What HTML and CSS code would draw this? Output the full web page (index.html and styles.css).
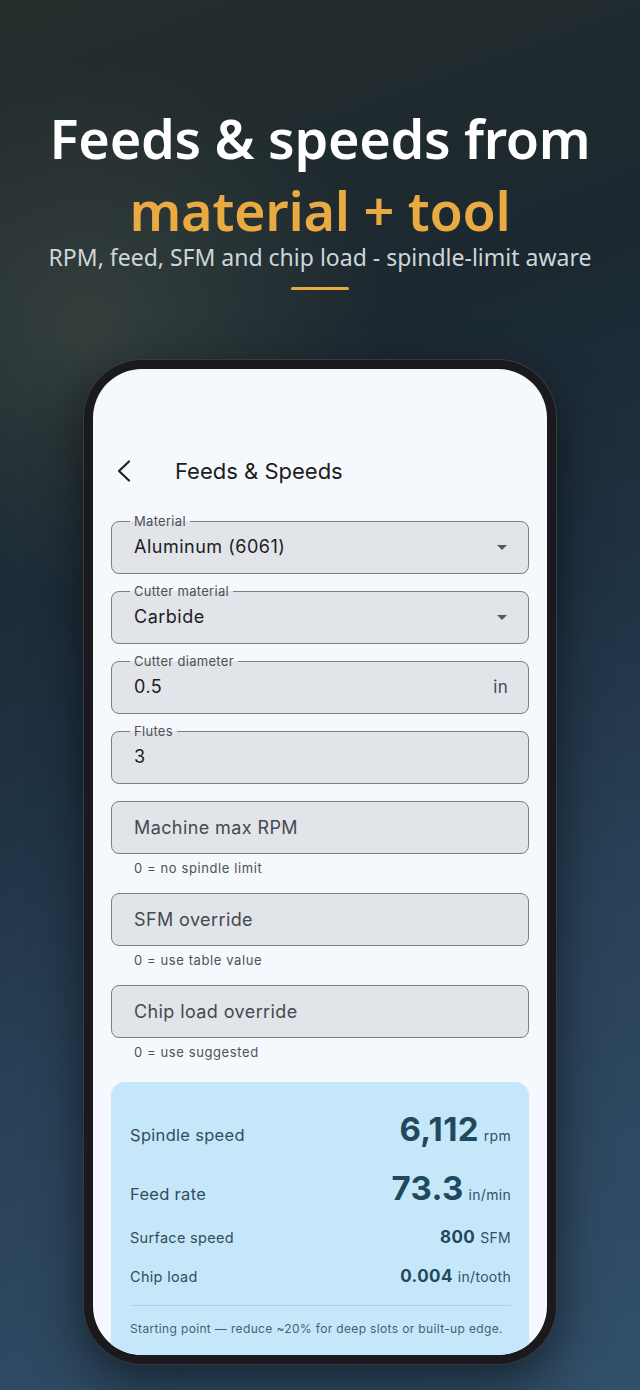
FILE: index.html
```html
<!DOCTYPE html>
<html lang="en">
<head>
  <meta charset="UTF-8" />
  <meta name="viewport" content="width=device-width, initial-scale=1.0"/>
  <title>Feeds &amp; Speeds</title>
  <link rel="stylesheet" href="styles.css">
</head>
<body>
  <div class="hero">
    <h1>Feeds &amp; speeds from<br><span class="accent">material + tool</span></h1>
    <p class="tagline">RPM, feed, SFM and chip load - spindle-limit aware</p>
    <div class="rule"></div>
  </div>

  <div class="phone">
    <div class="screen">
      <div class="appbar">
        <svg class="back" width="24" height="24" viewBox="0 0 24 24">
          <path d="M16 2.5 L6 12 L16 21.5" fill="none" stroke="#1f1f22" stroke-width="2.2" stroke-linecap="round" stroke-linejoin="round"/>
        </svg>
        <span class="title">Feeds &amp; Speeds</span>
      </div>

      <div class="form">
        <fieldset class="field">
          <legend>Material</legend>
          <span class="value">Aluminum (6061)</span>
          <span class="caret"></span>
        </fieldset>
        <fieldset class="field">
          <legend>Cutter material</legend>
          <span class="value">Carbide</span>
          <span class="caret"></span>
        </fieldset>
        <fieldset class="field">
          <legend>Cutter diameter</legend>
          <span class="value">0.5</span>
          <span class="suffix">in</span>
        </fieldset>
        <fieldset class="field">
          <legend>Flutes</legend>
          <span class="value">3</span>
        </fieldset>

        <div class="field empty"><span class="placeholder">Machine max RPM</span></div>
        <p class="helper">0 = no spindle limit</p>
        <div class="field empty"><span class="placeholder">SFM override</span></div>
        <p class="helper">0 = use table value</p>
        <div class="field empty"><span class="placeholder">Chip load override</span></div>
        <p class="helper">0 = use suggested</p>
      </div>

      <div class="results">
        <div class="row big">
          <span class="label">Spindle speed</span>
          <span class="num">6,112<small>rpm</small></span>
        </div>
        <div class="row big">
          <span class="label">Feed rate</span>
          <span class="num">73.3<small>in/min</small></span>
        </div>
        <div class="row">
          <span class="label">Surface speed</span>
          <span class="num">800<small>SFM</small></span>
        </div>
        <div class="row">
          <span class="label">Chip load</span>
          <span class="num">0.004<small>in/tooth</small></span>
        </div>
        <p class="note">Starting point — reduce ~20% for deep slots or built-up edge.</p>
      </div>
    </div>
  </div>
</body>
</html>
```

FILE: styles.css
```css
html, body {
  margin: 0;
  padding: 0;
}

body {
  width: 640px;
  height: 1390px;
  overflow: hidden;
  font-family: 'Noto Sans', sans-serif;
  background:
    radial-gradient(ellipse 420px 380px at 90px 330px, rgba(70, 80, 72, 0.55), rgba(70, 80, 72, 0) 70%),
    linear-gradient(160deg, #262e2d 0%, #1b2830 28%, #1f3142 48%, #2a4259 70%, #32506a 100%);
}

.hero {
  text-align: center;
  padding-top: 102px;
}

h1 {
  margin: 0;
  color: #fff;
  font-size: 54px;
  font-weight: 600;
  line-height: 72px;
  letter-spacing: -0.3px;
}

.accent {
  color: #e8aa41;
}

.tagline {
  margin: 0;
  color: #cfd6da;
  font-size: 23px;
  line-height: 22px;
}

.rule {
  width: 58px;
  height: 3px;
  margin: 19px auto 0;
  background: #e8aa41;
  border-radius: 2px;
}

.phone {
  width: 454px;
  height: 986px;
  margin: 70px auto 0;
  padding: 9px;
  background: #1a191e;
  border-radius: 58px;
  box-shadow: 0 0 0 1px #3a3a40, 0 18px 50px rgba(0, 0, 0, 0.55);
}

.screen {
  height: 100%;
  background: #f5f8fc;
  border-radius: 49px;
  overflow: hidden;
  font-family: 'Inter', 'Roboto', sans-serif;
  padding: 0 18px;
  box-sizing: border-box;
}

.appbar {
  display: flex;
  align-items: center;
  height: 40px;
  margin-top: 82px;
}

.back {
  margin-left: 2px;
}

.title {
  margin-left: 38px;
  font-size: 22px;
  color: #1d1d20;
}

.form {
  margin-top: 22px;
}

.field {
  display: flex;
  align-items: center;
  margin: 0 0 9px;
  padding: 7px 20px 15px 22px;
  min-width: 0;
  background: #e1e4e8;
  border: 1.3px solid #7c7f84;
  border-radius: 8px;
}

.field legend {
  margin-left: -4px;
  padding: 0 4px;
  font-size: 13px;
  line-height: 16px;
  color: #4d5055;
  letter-spacing: 0.3px;
}

.value {
  flex: 1;
  font-size: 18px;
  line-height: 22px;
  color: #1c1c1e;
  letter-spacing: 0.5px;
}

.caret {
  width: 0;
  height: 0;
  margin-right: 1px;
  border-left: 5px solid transparent;
  border-right: 5px solid transparent;
  border-top: 5px solid #55585c;
}

.suffix {
  font-size: 17px;
  color: #45484c;
  letter-spacing: 0.3px;
}

.field.empty {
  height: 53px;
  padding: 0 22px;
  margin-top: 17px;
  margin-bottom: 0;
  box-sizing: border-box;
}

.placeholder {
  font-size: 18px;
  color: #46494e;
  letter-spacing: 0.4px;
}

.helper {
  margin: 6px 0 0 23px;
  font-size: 13px;
  line-height: 16px;
  color: #4f5257;
  letter-spacing: 0.6px;
}

.results {
  margin-top: 22px;
  padding: 27px 18px 20px 19px;
  background: #c6e7fa;
  border-radius: 14px;
  box-shadow: 0 1px 2px rgba(0, 0, 0, 0.08);
}

.row {
  display: flex;
  justify-content: space-between;
  align-items: baseline;
  margin-bottom: 19px;
}

.row.big + .row {
  margin-top: 2px;
}

.row + .row:last-of-type {
  margin-top: 1px;
}

.label {
  font-size: 14.5px;
  letter-spacing: 0.3px;
  color: #344c5a;
}

.row.big .label {
  font-size: 16.5px;
}

.num {
  font-size: 17px;
  font-weight: 700;
  color: #21495d;
  letter-spacing: 0.4px;
}

.row.big .num {
  font-size: 33px;
  letter-spacing: 0.3px;
}

.num small {
  margin-left: 5px;
  font-size: 14px;
  font-weight: 400;
  letter-spacing: 0.3px;
  color: #2f5266;
}

.note {
  margin: 0;
  padding-top: 15px;
  border-top: 1.5px solid #b6d0de;
  font-size: 12px;
  color: #466170;
  letter-spacing: 0.35px;
  white-space: nowrap;
}
```
